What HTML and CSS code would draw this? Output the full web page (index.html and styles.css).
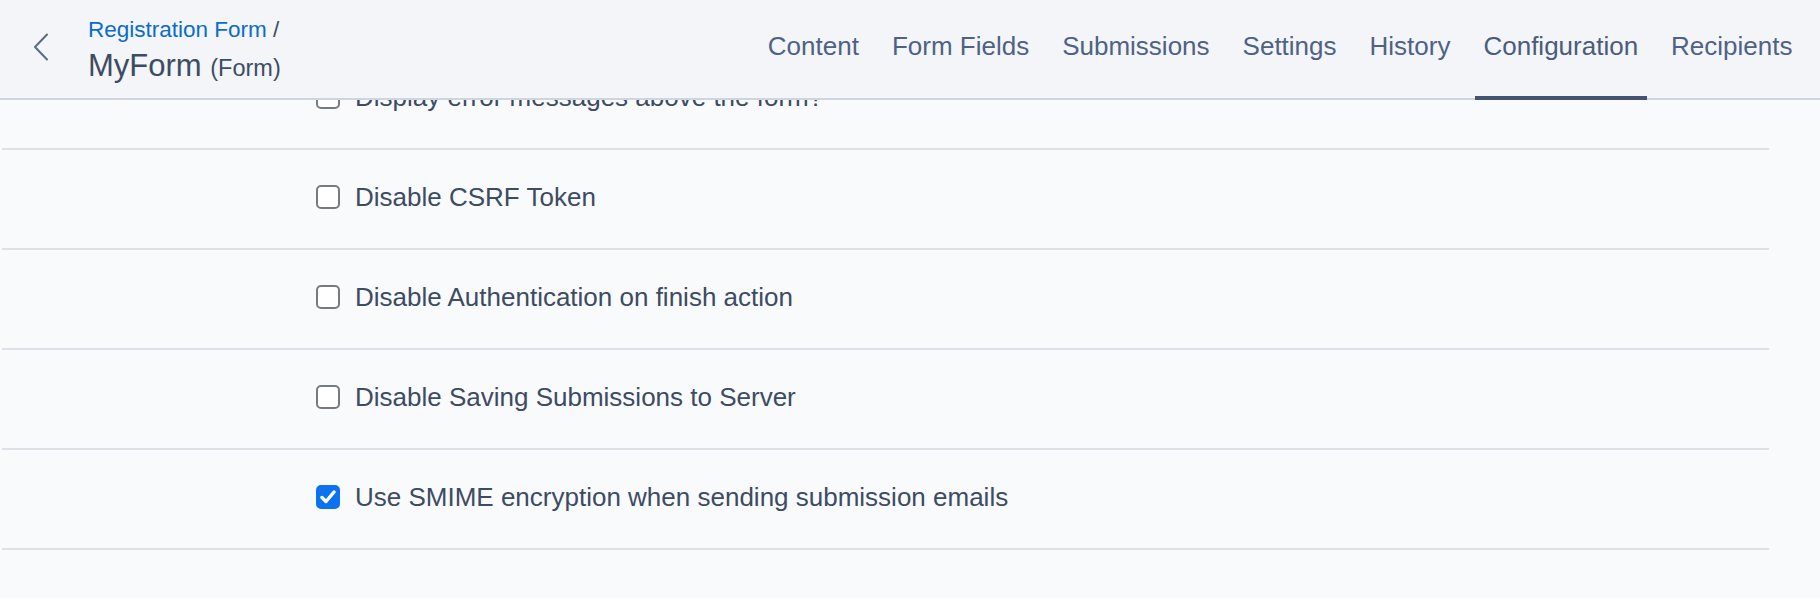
FILE: index.html
```html
<!DOCTYPE html>
<html lang="en">
<head>
<meta charset="utf-8">
<title>MyForm (Form)</title>
<link rel="stylesheet" href="styles.css">
</head>
<body>
<header class="topbar">
  <div class="crumbs">
    <a class="back" href="#" aria-label="Back">
      <svg width="16" height="28" viewBox="0 0 16 28"><path d="M14 1.5 L2 14 L14 26.5" fill="none" stroke="#5b6b84" stroke-width="2" stroke-linecap="round" stroke-linejoin="round"/></svg>
    </a>
    <div class="titles">
      <div class="parent"><a href="#">Registration Form</a> <span class="slash">/</span></div>
      <div class="title">MyForm <span class="type">(Form)</span></div>
    </div>
  </div>
  <nav class="tabs">
    <a class="tab" href="#">Content</a>
    <a class="tab" href="#">Form Fields</a>
    <a class="tab" href="#">Submissions</a>
    <a class="tab" href="#">Settings</a>
    <a class="tab" href="#">History</a>
    <a class="tab active" href="#">Configuration</a>
    <a class="tab" href="#">Recipients</a>
  </nav>
</header>
<main class="content">
  <div class="row"><span class="box"></span><span class="label">Display error messages above the form?</span></div>
  <div class="row"><span class="box"></span><span class="label">Disable CSRF Token</span></div>
  <div class="row"><span class="box"></span><span class="label">Disable Authentication on finish action</span></div>
  <div class="row"><span class="box"></span><span class="label">Disable Saving Submissions to Server</span></div>
  <div class="row"><span class="box checked"><svg width="16" height="14" viewBox="0 0 16 14"><path d="M2 7.5 L6 11.5 L14 2" fill="none" stroke="#fff" stroke-width="3.4" stroke-linecap="round" stroke-linejoin="round"/></svg></span><span class="label">Use SMIME encryption when sending submission emails</span></div>
</main>
</body>
</html>
```
FILE: styles.css
```css
* { box-sizing: border-box; }
html, body { margin: 0; padding: 0; }
body {
  background: #f9fafc;
  font-family: "Liberation Sans", Arial, Helvetica, sans-serif;
  color: #3d4b63;
  height: 598px;
  overflow: hidden;
}
a { text-decoration: none; color: inherit; }

.topbar {
  position: fixed;
  top: 0; left: 0; right: 0;
  height: 100px;
  background: #f3f5f8;
  border-bottom: 2px solid #cfd5de;
  display: flex;
  justify-content: space-between;
  align-items: stretch;
  padding: 0 19px 0 33px;
  z-index: 2;
}
.crumbs { display: flex; align-items: flex-start; }
.back { display: block; margin-top: 33px; width: 16px; height: 28px; }
.back svg { display: block; }
.titles { margin-left: 39px; padding-top: 16px; }
.parent { font-size: 22.5px; line-height: 28px; color: #3d4b63; }
.parent a { color: #0b6ccb; }
.title { font-size: 31px; line-height: 36px; color: #3e4c63; margin-top: 4px; }
.type { font-size: 23.5px; }

.tabs { display: flex; gap: 16px; align-items: stretch; }
.tab {
  position: relative;
  display: flex;
  align-items: center;
  padding: 0 8.5px 5px;
  font-size: 26px;
  color: #4f6285;
}
.tab.active { color: #4a5c7c; }
.tab.active::after {
  content: "";
  position: absolute;
  left: 0; right: 0; bottom: -2px;
  height: 4px;
  background: #435470;
}

.content {
  padding-top: 50px;
  width: 1769px;
  padding-left: 2px;
}
.row {
  height: 100px;
  border-bottom: 2px solid #dde2e8;
  display: flex;
  align-items: center;
  padding-left: 314px;
  padding-bottom: 4px;
}
.box {
  width: 24px; height: 24px;
  border: 2px solid #777b80;
  border-radius: 5px;
  background: #fff;
  flex: none;
  display: flex;
  align-items: center;
  justify-content: center;
}
.box.checked { background: #0d72f0; border-color: #0d72f0; }
.box svg { display: block; }
.label {
  margin-left: 15px;
  font-size: 26px;
  color: #3d4b63;
  white-space: nowrap;
}
```
